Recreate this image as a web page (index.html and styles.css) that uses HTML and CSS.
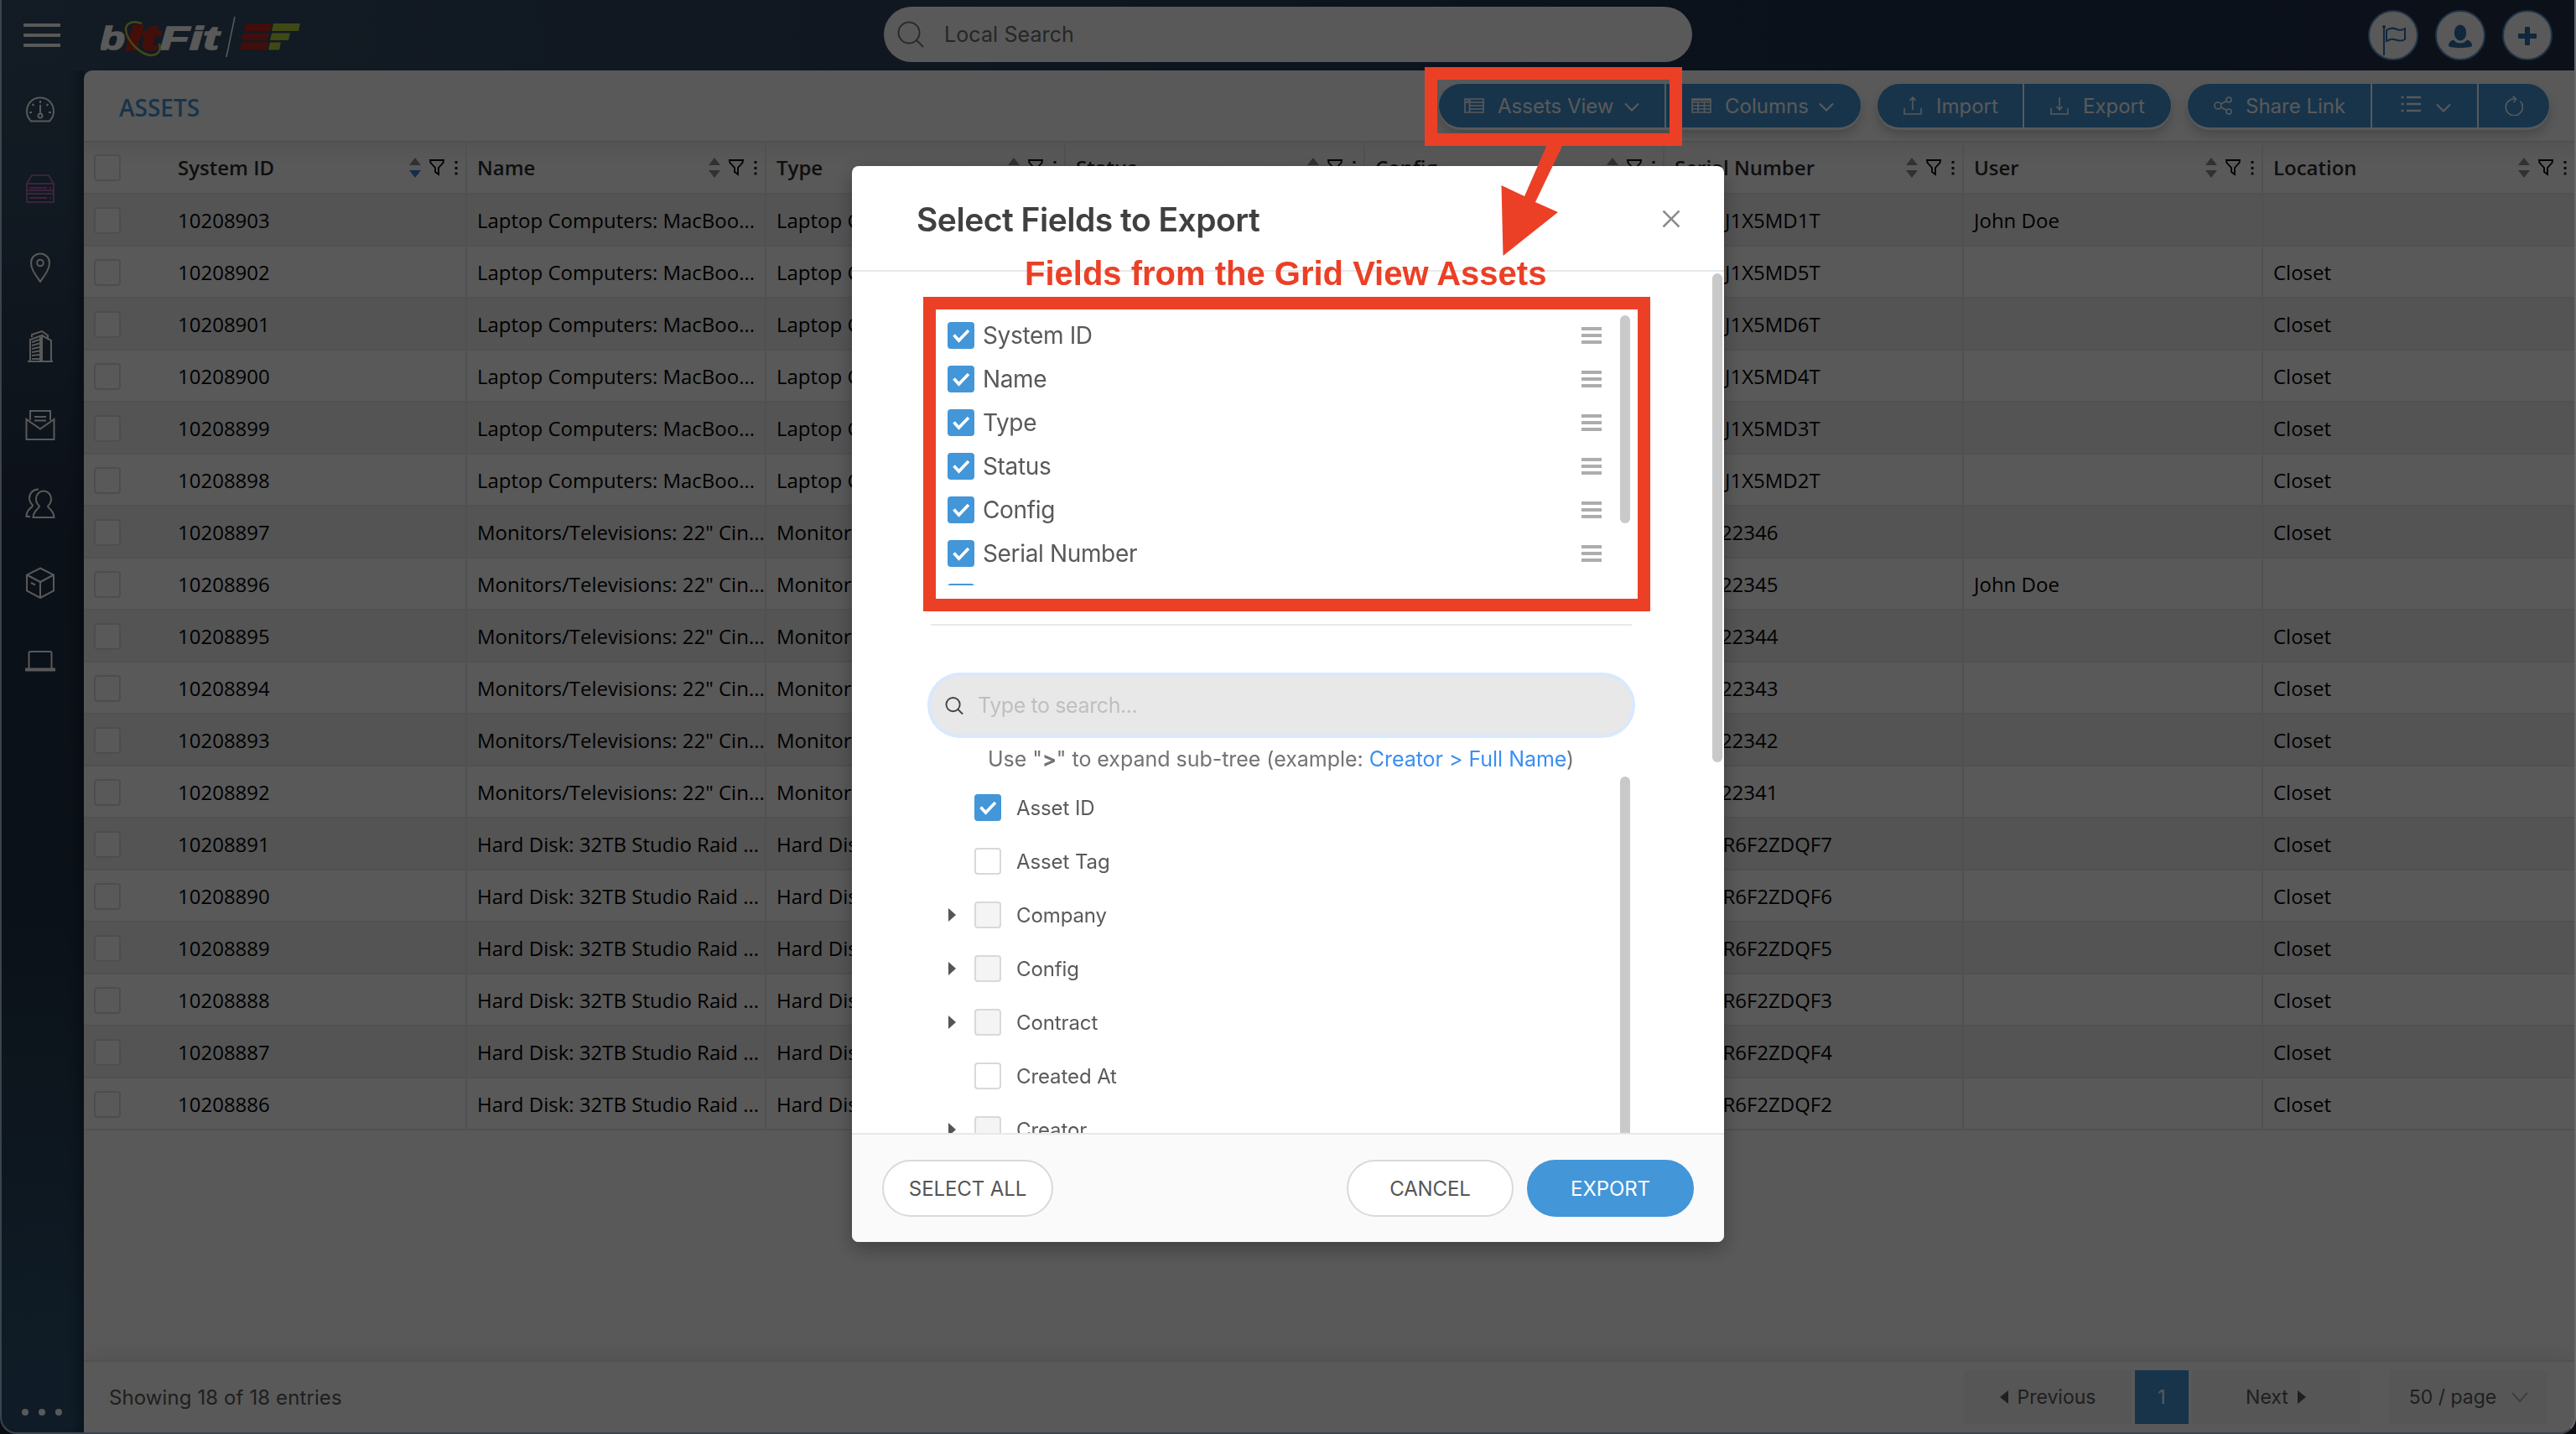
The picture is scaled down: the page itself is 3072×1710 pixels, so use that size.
FILE: index.html
```html
<!DOCTYPE html>
<html lang="en">
  <head>
    <meta charset="UTF-8" />
    <meta name="viewport" content="width=device-width, initial-scale=1.0" />
    <title>Assets</title>
    <link rel="stylesheet" href="styles.css">
  </head>
  <body>
    <div class="app">
      <header class="topbar">
        <div class="topbar-left">
          <div class="hamburger"><span></span><span></span><span></span></div>
          <svg class="logo" width="240" height="52" viewBox="120 18 240 52">
            <g font-family="Liberation Sans" font-weight="bold" font-style="italic" font-size="39" stroke-width="1.5">
              <text x="119" y="59" fill="#fff" stroke="#fff" textLength="30" lengthAdjust="spacingAndGlyphs">b</text>
              <text x="151" y="59" fill="#c4281e" stroke="#c4281e" stroke-width="3" textLength="38" lengthAdjust="spacingAndGlyphs">it</text>
              <text x="191" y="59" fill="#fff" stroke="#fff" textLength="70" lengthAdjust="spacingAndGlyphs">Fit</text>
            </g>
            <path d="M169 28C160 24 150 27 150 35C151 49 168 66 181 66C190 65 192 59 190 52" fill="none" stroke="#b5d140" stroke-width="2.500" />
            <path d="M280 20L270 68" stroke="#fff" stroke-width="1.5" />
            <path d="M293 28h31l-2 9h-31zM290 39.500h31l-2 8.500h-31zM288 50.500h32l-2 9h-32z" fill="#bd2a20" />
            <path d="M326 28h32l-2 9h-32zM324 39.500h22l-2 8.500h-22zM322 50.500h13l-2 9h-13z" fill="#b5d140" />
          </svg>
        </div>
        <div class="local-search">
          <svg width="32" height="32" viewBox="0 0 32 32" fill="none" stroke="#7a7a7a" stroke-width="2">
            <circle cx="14" cy="14" r="12.500" /><path d="M23 23l8 8" />
          </svg>
          <span>Local Search</span>
        </div>
        <div class="topbar-right">
          <div class="circle">
            <svg width="60" height="60" viewBox="0 0 60 60" fill="none" stroke="#2f70ad" stroke-width="2">
              <path d="M17 19v33" /><circle cx="17" cy="18" r="1.500" fill="#2f70ad" stroke-width="1" />
              <path d="M20 22c5-3 8-3 11-1.500s7 2 11-.5v13c-4 2.500-7 2-11 .5s-6-1-11 1.500z" />
            </svg>
          </div>
          <div class="circle">
            <svg width="60" height="60" viewBox="0 0 60 60" fill="#2f70ad">
              <ellipse cx="28" cy="25" rx="7.200" ry="9.500" />
              <path d="M20 33.500c2.500 3 5 4 8 4s5.500-1 8-4c4 1 6 4 6 7c0 1.500-5 2.500-14 2.500s-14-1-14-2.500c0-3 2-6 6-7z" />
            </svg>
          </div>
          <div class="circle">
            <svg width="60" height="60" viewBox="0 0 60 60" fill="#2f70ad">
              <rect x="17" y="26" width="22" height="6" rx="1" /><rect x="25" y="18" width="6" height="22" rx="1" />
            </svg>
          </div>
        </div>
      </header>

      <div class="main">
        <nav class="sidebar">
          <div class="nav-item">
            <svg width="36" height="36" viewBox="0 0 36 36">
              <path d="M7 31.500C3.500 28 2 24 2 20C2 10 9 3.500 18 3.500S34 10 34 20C34 24 32.500 28 29 31.500z" />
              <circle cx="18" cy="25" r="2.500" /><path d="M18 22V12M18 7v3M8.500 11l2 2M27.500 11l-2 2M5 21h3M28 21h3" />
            </svg>
          </div>
          <div class="nav-item active">
            <svg width="36" height="36" viewBox="0 0 36 36">
              <path d="M2 12L8 2h20l6 10v8H2zM2 12h32M2 24h32v10H2zM2 20v4M34 20v4" /><path d="M5 17h21M29 17h2M5 29h21M29 29h2" />
            </svg>
          </div>
          <div class="nav-item">
            <svg width="36" height="36" viewBox="0 0 36 36">
              <path d="M18 35C12 26 7 20 7 12.500C7 6 12 1.500 18 1.500S29 6 29 12.500C29 20 24 26 18 35z" /><circle cx="18" cy="12.500" r="3.800" />
            </svg>
          </div>
          <div class="nav-item">
            <svg width="36" height="38" viewBox="0 0 36 38">
              <path d="M3 37h30M6 37V11l14-5v31M20 6l11 6v25M8 8V5l12-4l7 5v3M8 14l9-3M8 18l9-2.500M8 22l9-2M8 26l9-1.500M8 30l9-1M8 34h9" /><path d="M18 8v28" />
            </svg>
          </div>
          <div class="nav-item">
            <svg width="36" height="38" viewBox="0 0 36 38">
              <path d="M6 13V2h24v11M1.500 12v24h33V12L18 23.500zM11 9h14M11 13.500h14" />
            </svg>
          </div>
          <div class="nav-item">
            <svg width="36" height="38" viewBox="0 0 36 38">
              <path d="M22 3.500c5 0 9 4 9 9.500c0 4-1.500 6.500-4 8.500c0 3 7 4 7.500 13.500h-25C10 26 17 24.500 17 21.500c-2.500-2-4-4.500-4-8.500c0-5.500 4-9.500 9-9.500z" />
              <path d="M16 1.500C9.500 1.500 5 6 5 12c0 4 1.500 6 4 8.500C9 24 1.500 24 1.500 34H6" />
            </svg>
          </div>
          <div class="nav-item">
            <svg width="36" height="38" viewBox="0 0 36 38">
              <path d="M18 1.500L34 9.500v19L18 37L2 28.500v-19zM2 9.500L18 18l16-8.500M18 18v19M7 19l5 2.500" />
            </svg>
          </div>
          <div class="nav-item">
            <svg width="36" height="28" viewBox="0 0 36 28">
              <path d="M4.500 22V3.500Q4.500 2 6 2h24q1.500 0 1.500 1.500V22M1 22.500h34v2H1z" />
            </svg>
          </div>
          <div class="more"><span></span><span></span><span></span></div>
        </nav>

        <section class="panel">
          <div class="titlebar">
            <h1>ASSETS</h1>
            <div class="toolbar">
              <div class="group">
                <div class="btn w-view">
                  <svg width="24" height="18" viewBox="0 0 24 18"><path d="M1 1h22v16H1zM1 5h22M6.500 5v12M6.500 9h16M6.500 13h16M3 3h5" /></svg>
                  <span>Assets View</span>
                  <svg class="chev" width="18" height="11" viewBox="0 0 18 11"><path d="M1 1.500l8 8l8-8" /></svg>
                </div>
                <div class="btn w-cols">
                  <svg width="24" height="18" viewBox="0 0 24 18"><path d="M1 1h22v16H1zM1 2.500h22M1 5h22M1 9h22M1 13h22M8 5v12M15.500 5v12" /></svg>
                  <span>Columns</span>
                  <svg class="chev" width="18" height="11" viewBox="0 0 18 11"><path d="M1 1.500l8 8l8-8" /></svg>
                </div>
              </div>
              <div class="group">
                <div class="btn w-io">
                  <svg width="22" height="22" viewBox="0 0 22 22"><path d="M1 14v7h20v-7M11 16V1M7.500 5L11 1l3.500 4" /></svg>
                  <span>Import</span>
                </div>
                <div class="btn w-io">
                  <svg width="22" height="22" viewBox="0 0 22 22"><path d="M1 14v7h20v-7M11 1v15M7.500 12L11 16l3.500-4" /></svg>
                  <span>Export</span>
                </div>
              </div>
              <div class="group">
                <div class="btn w-share">
                  <svg width="22" height="22" viewBox="0 0 22 22"><circle cx="5" cy="11" r="4" /><circle cx="18" cy="4" r="3" /><circle cx="18" cy="18" r="3" /><path d="M8.500 9l7-3.500M8.500 13l7 3.500" /></svg>
                  <span>Share Link</span>
                </div>
                <div class="btn w-list">
                  <svg class="list" width="25" height="20" viewBox="0 0 25 20"><path d="M7 2h17M7 10h17M7 18h17M.5 2h3M.5 10h3M.5 18h3" /></svg>
                  <svg class="chev" width="18" height="11" viewBox="0 0 18 11"><path d="M1 1.500l8 8l8-8" /></svg>
                </div>
                <div class="btn w-refresh">
                  <svg width="22" height="24" viewBox="0 0 22 24"><path d="M18.500 6.800A10 10 0 1 1 13 3.900M9.500 .7L13.500 4L10.500 8" /></svg>
                </div>
              </div>
            </div>
          </div>

          <div class="grid" id="grid"></div>

          <footer class="pager">
            <span class="entries">Showing 18 of 18 entries</span>
            <div class="page-btn prev"><i class="tri-left"></i><span>Previous</span></div>
            <div class="page-btn current"><span>1</span></div>
            <div class="page-btn next"><span>Next</span><i class="tri-right"></i></div>
            <div class="page-btn size">
              <span>50 / page</span>
              <svg width="20" height="13" viewBox="0 0 20 13" fill="none" stroke="#b0b0b0" stroke-width="2"><path d="M1 1l9 10l9-10" /></svg>
            </div>
          </footer>
        </section>
      </div>
    </div>

    <div class="backdrop">
      <div class="modal">
        <div class="modal-head">
          <h2>Select Fields to Export</h2>
          <svg width="22" height="22" viewBox="0 0 22 22" stroke="#8c8c8c" stroke-width="2.500"><path d="M1.500 1.500l19 19M20.500 1.500l-19 19" /></svg>
        </div>
        <div class="modal-body">
          <div class="fields" id="fields"></div>
          <div class="rule"></div>
          <div class="field-search">
            <svg width="22" height="23" viewBox="0 0 23 23" fill="none" stroke="#444" stroke-width="2"><circle cx="10" cy="10" r="8.500" /><path d="M16 16l6 6" /></svg>
            <span>Type to search...</span>
          </div>
          <p class="hint">Use "<b>&gt;</b>" to expand sub-tree (example: <a>Creator &gt; Full Name</a>)</p>
          <div class="tree" id="tree"></div>
          <div class="body-thumb"></div>
        </div>
        <div class="modal-foot">
          <button type="button">SELECT ALL</button>
          <div class="right">
            <button type="button">CANCEL</button>
            <button type="button" class="primary">EXPORT</button>
          </div>
        </div>
      </div>
    </div>

    <div class="frame"></div>

    <!-- Callouts -->
    <div class="callout callout-view"></div>
    <div class="callout callout-fields"></div>
    <svg class="arrow" width="80" height="140" viewBox="1785 170 80 140"><path d="M1846 170L1865 170L1831 241L1858 253L1792.500 305L1790.500 221L1818 234z" fill="#eb4026" /></svg>
    <div class="callout-text">Fields from the Grid View Assets</div>

    <script src="script.js"></script>
  </body>
</html>
```

FILE: styles.css
```css
* {
  box-sizing: border-box;
}
body {
  margin: 0;
  width: 3072px;
  height: 1710px;
  overflow: hidden;
  font-family: Inter, sans-serif;
  font-size: 24px;
  color: #595959;
}
h1,
h2,
p {
  margin: 0;
}
svg {
  display: block;
  flex: none;
}
.app {
  height: 1710px;
  display: flex;
  flex-direction: column;
  background: linear-gradient(180deg, #374e68 0, #324860 250px, #223146 650px, #223347 1100px, #2c5270 1650px);
}

/* top bar */
.topbar {
  height: 84px;
  display: grid;
  grid-template-columns: 1fr 964px 1fr;
  background: linear-gradient(90deg, #374e68 0, #30445d 1000px, #22344f 2000px, #222f48 3072px);
}
.topbar-left {
  display: flex;
  align-items: flex-start;
  padding: 18px 0 0 28px;
}
.hamburger {
  width: 44px;
  display: flex;
  flex-direction: column;
  gap: 8px;
  margin: 10px 48px 0 0;
}
.hamburger span {
  height: 4px;
  background: white;
}
.local-search {
  height: 66px;
  margin-top: 8px;
  padding-left: 16px;
  display: flex;
  align-items: center;
  gap: 24px;
  background: white;
  border-radius: 33px;
  font-size: 25px;
  letter-spacing: 0.1px;
  color: #6e6e6e;
}
.topbar-right {
  display: flex;
  justify-content: flex-end;
  gap: 20px;
  padding: 12px 28px 0 0;
}
.circle {
  width: 60px;
  height: 60px;
  border-radius: 50%;
  border: 2px solid #5b95cc;
  background: white;
  overflow: hidden;
}

/* layout */
.main {
  flex: 1;
  display: flex;
}
.sidebar {
  width: 100px;
  padding-right: 4px;
  display: flex;
  flex-direction: column;
  box-shadow: inset -14px 0 14px -8px rgba(0, 0, 0, 0.3);
}
.nav-item {
  height: 94px;
  display: flex;
  align-items: center;
  justify-content: center;
}
.nav-item svg {
  fill: none;
  stroke: white;
  stroke-width: 2;
}
.nav-item.active svg {
  stroke: #ac64ac;
}
.more {
  margin-top: auto;
  margin-bottom: 22px;
  padding-left: 26px;
  display: flex;
  gap: 12px;
}
.more span {
  width: 8px;
  height: 8px;
  border-radius: 50%;
  background: white;
}
.panel {
  flex: 1;
  display: flex;
  flex-direction: column;
  background: white;
  border-radius: 10px 0 0 0;
  padding-bottom: 2px;
}
.titlebar {
  height: 86px;
  padding: 0 32px 0 42px;
  display: flex;
  align-items: center;
  justify-content: space-between;
  border-bottom: 2px solid #e2e2e2;
}
h1 {
  font-family: "Open Sans", sans-serif;
  font-size: 28px;
  font-weight: 600;
  color: #4396d8;
  padding-top: 4px;
}
.toolbar {
  display: flex;
  gap: 20px;
}
.group {
  height: 52px;
  display: flex;
  border-radius: 26px;
  overflow: hidden;
  background: #4396d8;
  box-shadow: 0 0 0 1px white, 0 3px 0 white, 0 8px 14px rgba(0, 0, 0, 0.22);
}
.btn {
  display: flex;
  align-items: center;
  gap: 16px;
  padding-left: 30px;
  color: white;
  border-right: 2px solid white;
}
.btn:last-child {
  border-right: none;
}
.btn svg {
  fill: none;
  stroke: white;
  stroke-width: 1.6;
}
.btn .chev {
  stroke-width: 2.2;
  margin: 3px 0 0 -4px;
}
.btn .list {
  stroke-width: 2.4;
  margin-top: -4px;
}
.w-view { width: 271px; }
.w-cols { width: 232px; }
.w-io { width: 175px; padding-left: 31px; gap: 17px; }
.w-share { width: 220px; padding-left: 31px; }
.w-list { width: 127px; padding-left: 34px; }
.w-list .chev { margin-left: 1px; margin-top: 5px; }
.w-refresh { width: 84px; padding-left: 31px; }

/* data grid */
.grid {
  flex: 1;
  font-family: "Open Sans", sans-serif;
  color: black;
  background: linear-gradient(180deg, #f1f1f1, white 28px);
}
.row {
  height: 62px;
  display: grid;
  grid-template-columns: 457px repeat(6, 357px) 1fr;
  border-bottom: 2px solid #e8e8e8;
}
.row:nth-child(even) {
  background: #f1f1f1;
}
.cell {
  display: flex;
  align-items: center;
  padding: 0 0 0 12px;
  border-right: 2px solid #e8e8e8;
  white-space: nowrap;
  overflow: hidden;
}
.cell:last-child {
  border-right-color: transparent;
}
.head .cell {
  font-weight: 600;
  color: #2b2b2b;
}
.head .cell span {
  margin-top: -1px;
}
.box {
  flex: none;
  width: 32px;
  height: 32px;
  margin: 2px 68px 0 0;
  border: 2px solid #dcdcdc;
  border-radius: 4px;
  background: white;
}
.head .box {
  margin-top: 0;
}
.tools {
  margin-left: auto;
  margin-right: 8px;
}

/* pager */
.pager {
  height: 86px;
  padding: 0 34px 0 30px;
  display: flex;
  align-items: center;
  border-top: 2px solid #e6e6e6;
  box-shadow: 0 -8px 20px rgba(0, 0, 0, 0.07);
  color: #595959;
}
.entries {
  margin-right: auto;
  letter-spacing: 0.1px;
}
.page-btn {
  height: 64px;
  display: flex;
  align-items: center;
  justify-content: center;
  gap: 11px;
  background: #f7f7f7;
  font-size: 23px;
}
.prev { width: 200px; }
.next { width: 200px; }
.current {
  width: 64px;
  margin: 0 4px;
  background: #4396d8;
  color: white;
}
.size {
  width: 188px;
  margin-left: 36px;
  gap: 18px;
}
.tri-left,
.tri-right {
  border: 8px solid transparent;
  border-right: 10px solid #595959;
  border-left: none;
}
.tri-right {
  border-left: 10px solid #595959;
  border-right: none;
}

/* modal */
.backdrop {
  position: fixed;
  inset: 0;
  display: flex;
  justify-content: center;
  align-items: flex-start;
  padding-top: 198px;
  background: rgba(0, 0, 0, 0.65);
}
.modal {
  width: 1040px;
  height: 1283px;
  display: flex;
  flex-direction: column;
  background: white;
  border-radius: 8px;
  overflow: hidden;
  box-shadow: 0 8px 24px rgba(0, 0, 0, 0.3);
}
.modal-head {
  height: 126px;
  padding: 2px 52px 0 77px;
  display: flex;
  align-items: center;
  justify-content: space-between;
  border-bottom: 2px solid #e8e8e8;
}
.modal-head h2 {
  font-size: 39px;
  font-weight: 600;
  letter-spacing: -0.5px;
  color: #404040;
}
.modal-body {
  position: relative;
  height: 1027px;
  padding: 50px 110px 0 94px;
  overflow: hidden;
}
.fields {
  position: relative;
  height: 324px;
  overflow: hidden;
}
.field {
  height: 52px;
  padding: 0 36px 0 20px;
  display: flex;
  align-items: center;
  gap: 10px;
  font-size: 28px;
  letter-spacing: -0.35px;
}
.field .handle {
  margin-left: auto;
}
.check {
  flex: none;
  width: 32px;
  height: 32px;
  border: 2px solid #d9d9d9;
  border-radius: 4px;
  background: white;
}
.check.disabled {
  background: #f4f4f4;
}
.check.on {
  border: none;
  background: #4396d8;
}
.thumb,
.body-thumb {
  position: absolute;
  right: 2px;
  top: 2px;
  width: 12px;
  height: 248px;
  border-radius: 6px;
  background: #c9c9c9;
}
.body-thumb {
  height: 583px;
}
.rule {
  height: 2px;
  margin: 46px 0 60px;
  background: #e8e8e8;
}
.field-search {
  height: 70px;
  padding-left: 17px;
  display: flex;
  align-items: center;
  gap: 17px;
  border-radius: 35px;
  background: #e8e8e8;
  box-shadow: 0 0 0 4px #d9e8fc;
  font-size: 25px;
  letter-spacing: -0.4px;
  color: #bfbfbf;
}
.hint {
  height: 50px;
  padding: 9px 0 0 68px;
  line-height: 40px;
  font-size: 25px;
  letter-spacing: -0.03px;
  color: #737373;
  white-space: nowrap;
}
.hint a {
  color: #3b8ff0;
}
.tree {
  position: relative;
  height: 480px;
  padding-top: 5px;
  overflow: hidden;
}
.node {
  height: 64px;
  display: flex;
  align-items: center;
  letter-spacing: -0.1px;
}
.node .caret {
  width: 31px;
  height: 16px;
  margin-left: 21px;
}
.node .caret.open {
  background: #555;
  clip-path: polygon(0 0, 9px 8px, 0 16px);
}
.node span {
  margin-left: 18px;
}
.tree .thumb {
  top: 0;
  height: 600px;
}
.modal-foot {
  flex: 1;
  padding: 30px 36px 0;
  display: flex;
  align-items: flex-start;
  justify-content: space-between;
  border-top: 2px solid #e8e8e8;
  background: #fafafa;
}
.right {
  display: flex;
  gap: 16px;
}
button {
  width: 199px;
  height: 68px;
  border: 2px solid #d9d9d9;
  border-radius: 34px;
  background: white;
  font-family: inherit;
  font-size: 24px;
  letter-spacing: -0.1px;
  color: #555;
}
.modal-foot > button {
  width: 204px;
}
button.primary {
  background: #4396d8;
  border-color: #4396d8;
  color: white;
}

/* window edge */
.frame {
  position: fixed;
  inset: -20px 0 0 0;
  border: 2px solid #3b434c;
  border-right-color: #696969;
  border-radius: 0 0 20px 20px;
  box-shadow: 0 0 0 20px #0b0c12;
}

/* callouts */
.callout {
  position: absolute;
  border: 15px solid #eb4026;
}
.callout-view {
  left: 1699px;
  top: 80px;
  width: 307px;
  height: 94px;
}
.callout-fields {
  left: 1101px;
  top: 354px;
  width: 867px;
  height: 375px;
}
.arrow {
  position: absolute;
  left: 1785px;
  top: 170px;
}
.callout-text {
  position: absolute;
  left: 1222px;
  top: 303px;
  font: bold 40px/46px "Liberation Sans", sans-serif;
  color: #eb4026;
  white-space: nowrap;
}
```

FILE: script.js
```js
const columns = ["System ID", "Name", "Type", "Status", "Config", "Serial Number", "User", "Location"];

const laptop = ["Laptop Computers: MacBoo...", "Laptop Computers"];
const monitor = ['Monitors/Televisions: 22" Cin...', "Monitors/Televisions"];
const disk = ["Hard Disk: 32TB Studio Raid ...", "Hard Disk"];

const assets = [
  [10208903, laptop, "C02GJ1X5MD1T", "John Doe", ""],
  [10208902, laptop, "C02GJ1X5MD5T", "", "Closet"],
  [10208901, laptop, "C02GJ1X5MD6T", "", "Closet"],
  [10208900, laptop, "C02GJ1X5MD4T", "", "Closet"],
  [10208899, laptop, "C02GJ1X5MD3T", "", "Closet"],
  [10208898, laptop, "C02GJ1X5MD2T", "", "Closet"],
  [10208897, monitor, "112222346", "", "Closet"],
  [10208896, monitor, "112222345", "John Doe", ""],
  [10208895, monitor, "112222344", "", "Closet"],
  [10208894, monitor, "112222343", "", "Closet"],
  [10208893, monitor, "112222342", "", "Closet"],
  [10208892, monitor, "112222341", "", "Closet"],
  [10208891, disk, "C3KXR6F2ZDQF7", "", "Closet"],
  [10208890, disk, "C3KXR6F2ZDQF6", "", "Closet"],
  [10208889, disk, "C3KXR6F2ZDQF5", "", "Closet"],
  [10208888, disk, "C3KXR6F2ZDQF3", "", "Closet"],
  [10208887, disk, "C3KXR6F2ZDQF4", "", "Closet"],
  [10208886, disk, "C3KXR6F2ZDQF2", "", "Closet"],
];

function tools(sorted) {
  return `<svg class="tools" width="60" height="26" viewBox="0 0 60 26">
    <path d="M1 10L8 1l7 9z" fill="#8c8c8c"/><path d="M1 16h14l-7 9z" fill="${sorted ? "#3b82dc" : "#8c8c8c"}"/>
    <path d="M26 4h16l-.5 3l-5.500 6v8l-4-3v-5l-5.500-6z" fill="none" stroke="#000" stroke-width="1.800"/>
    <path d="M55.500 5h3v3h-3zM55.500 12h3v3h-3zM55.500 18.500h3v3h-3z" fill="#222"/></svg>`;
}

let html = '<div class="row head">';
columns.forEach((name, i) => {
  html += `<div class="cell">${i == 0 ? '<div class="box"></div>' : ""}<span>${name}</span>${tools(i == 0)}</div>`;
});
html += "</div>";

assets.forEach(([id, kind, serial, user, location]) => {
  const vals = [kind[0], kind[1], "", "", serial, user, location];
  html += `<div class="row"><div class="cell"><div class="box"></div>${id}</div>`;
  html += vals.map((v) => `<div class="cell">${v}</div>`).join("") + "</div>";
});
document.getElementById("grid").innerHTML = html;

const tick =
  '<svg class="check on" viewBox="0 0 32 32"><path d="M7.500 15.500l6 6.500L25 10" fill="none" stroke="#fff" stroke-width="3.600"/></svg>';
const handle =
  '<svg class="handle" width="24" height="20"><path d="M0 2h24M0 10h24M0 18h24" stroke="#adadad" stroke-width="4"/></svg>';

document.getElementById("fields").innerHTML =
  columns
    .slice(0, 7)
    .map((name) => `<div class="field">${tick}<span>${name}</span>${handle}</div>`)
    .join("") + '<div class="thumb"></div>';

// name, checked, has children
const nodes = [
  ["Asset ID", true, false],
  ["Asset Tag", false, false],
  ["Company", false, true],
  ["Config", false, true],
  ["Contract", false, true],
  ["Created At", false, false],
  ["Creator", false, true],
];
document.getElementById("tree").innerHTML =
  nodes
    .map(([name, checked, parent]) => {
      const box = checked ? tick : `<div class="check${parent ? " disabled" : ""}"></div>`;
      return `<div class="node"><div class="caret${parent ? " open" : ""}"></div>${box}<span>${name}</span></div>`;
    })
    .join("") + '<div class="thumb"></div>';
```
